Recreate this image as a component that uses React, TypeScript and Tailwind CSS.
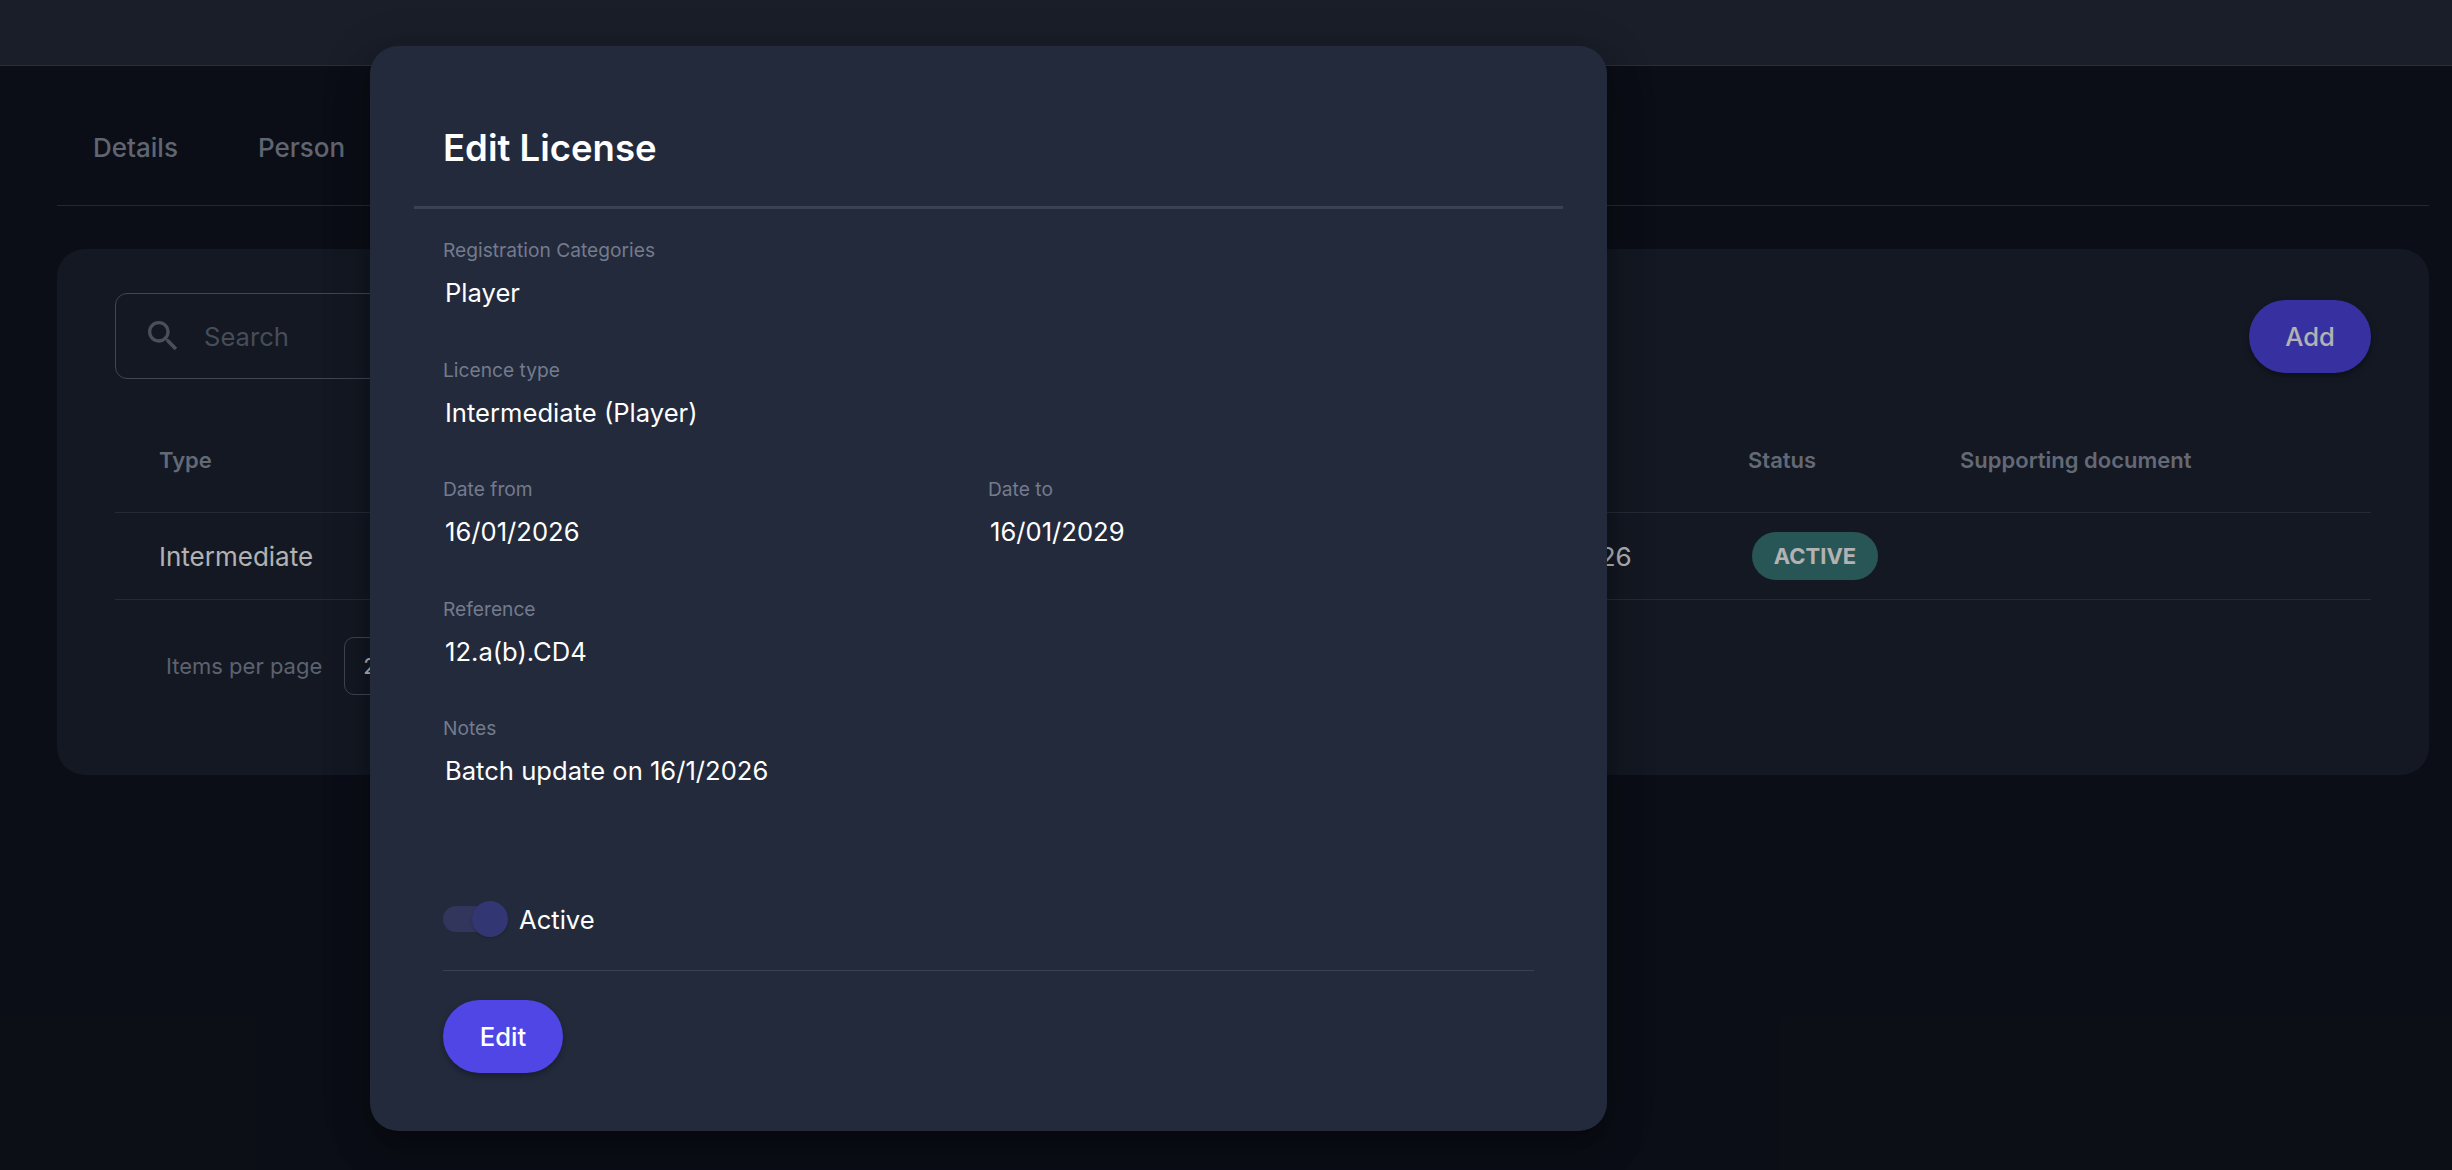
const font = "font-['Inter','Liberation_Sans',sans-serif]";

function Field({ label, value }: { label: string; value: string }) {
  return (
    <div className="h-[119.5px]">
      <div className="text-[19.2px] leading-[29px] text-[#737b8c]">{label}</div>
      <div className="mt-[10px] pl-[2px] text-[25.6px] leading-[36px] text-white">{value}</div>
    </div>
  );
}

export default function App() {
  return (
    <div className={`relative h-[1170px] w-full overflow-hidden bg-[#111520] ${font}`}>
      <header className="h-[66px] border-b border-[#3a4252] bg-[#252b3b]" />

      <nav className="ml-[57px] mr-[23px] flex h-[140px] items-start gap-[80px] border-b border-[#323a4a] pl-[36px] pt-[64px] text-[26px] font-medium leading-[36px] text-[#8891a3]">
        <span>Details</span>
        <span>Person</span>
      </nav>

      <section className="ml-[57px] mr-[23px] mt-[43px] h-[526px] rounded-[28px] bg-[#1c2332] px-[58px] pt-[44px]">
        <div className="flex items-start justify-between">
          <div className="flex h-[86px] w-[620px] items-center rounded-[12px] border border-[#5d6475] pl-[27px]">
            <svg viewBox="0 0 24 24" className="h-[40px] w-[40px] fill-[#6a7286]">
              <path d="M15.5 14h-.79l-.28-.27C15.41 12.59 16 11.11 16 9.5 16 5.91 13.09 3 9.5 3S3 5.91 3 9.5 5.91 16 9.5 16c1.61 0 3.09-.59 4.23-1.57l.27.28v.79l5 4.99L20.49 19l-4.99-5zm-6 0C7.01 14 5 11.99 5 9.5S7.01 5 9.5 5 14 7.01 14 9.5 11.99 14 9.5 14z" />
            </svg>
            <span className="ml-[21px] pt-[2px] text-[25.6px] text-[#666e80]">Search</span>
          </div>
          <button className="mt-[7px] h-[73px] w-[122px] rounded-full bg-[#4f46e5] pt-[2px] text-[25.6px] font-medium text-white shadow-[0_3px_6px_rgba(0,0,0,0.35)]">
            Add
          </button>
        </div>

        <div className="grid h-[134px] grid-cols-[690px_646px_253px_212px_1fr] items-center border-b border-[#353d4e] pt-[30px] text-[22px] font-semibold text-[#8f97a8]">
          <span className="pl-[44px]">Type</span>
          <span className="pl-[44px]">Date from</span>
          <span className="pl-[44px]">Date to</span>
          <span className="pl-[44px]">Status</span>
          <span className="pl-[44px]">Supporting document</span>
        </div>

        <div className="grid h-[87px] grid-cols-[690px_646px_253px_212px_1fr] items-center border-b border-[#353d4e] text-[26px] text-white">
          <span className="pl-[44px] pt-[1px]">Intermediate</span>
          <span className="pl-[44px] pt-[1px]">16/01/2026</span>
          <span className="pl-[44px] pt-[1px]">16/01/2026</span>
          <span className="pl-[48px]">
            <span className="inline-flex h-[48px] w-[126px] items-center justify-center rounded-full bg-[#3a7a7a] text-[22px] font-bold leading-none">
              ACTIVE
            </span>
          </span>
          <span />
        </div>

        <div className="mt-[37px] flex items-center pl-[51px]">
          <span className="text-[22px] text-[#858da0]">Items per page</span>
          <div className="ml-[22px] flex h-[58px] w-[100px] items-center rounded-[10px] border border-[#5d6475] pl-[18px] text-[22px] text-white">
            25
          </div>
        </div>
      </section>

      <div className="absolute inset-0 bg-black/30" />

      <div className="absolute left-[370px] top-[46px] flex h-[1085px] w-[1237px] flex-col rounded-[28px] bg-[#232a3c] px-[73px] shadow-[0_11px_15px_-7px_rgba(0,0,0,0.2),0_24px_38px_3px_rgba(0,0,0,0.14),0_9px_46px_8px_rgba(0,0,0,0.12)]">
        <div className="-mx-[29px] h-[163px] border-b-[3px] border-[#3b4153] pl-[29px] pt-[78px]">
          <h2 className="text-[36.5px] font-semibold leading-[48px] text-white">Edit License</h2>
        </div>

        <div className="pt-[27px]">
          <Field label="Registration Categories" value="Player" />
          <Field label="Licence type" value="Intermediate (Player)" />
          <div className="grid grid-cols-[545px_1fr]">
            <Field label="Date from" value="16/01/2026" />
            <Field label="Date to" value="16/01/2029" />
          </div>
          <Field label="Reference" value="12.a(b).CD4" />
          <Field label="Notes" value="Batch update on 16/1/2026" />
        </div>

        <div className="mt-[67.5px] flex h-[36px] items-center">
          <div className="relative h-[26px] w-[60px] rounded-full bg-[#32365c]">
            <div className="absolute -top-[5px] left-[29px] h-[36px] w-[36px] rounded-full bg-[#323672] shadow-[0_1px_3px_rgba(0,0,0,0.2)]" />
          </div>
          <span className="ml-[16px] pt-[1px] text-[25.6px] leading-[36px] text-white">Active</span>
        </div>

        <div className="mt-[33px] w-[1091px] border-t border-[#3b4153] pt-[29px]">
          <button className="h-[73px] w-[120px] rounded-full bg-[#4f46e5] pt-[2px] text-[25.6px] font-medium text-white shadow-[0_3px_6px_rgba(0,0,0,0.3)]">
            Edit
          </button>
        </div>
      </div>
    </div>
  );
}
